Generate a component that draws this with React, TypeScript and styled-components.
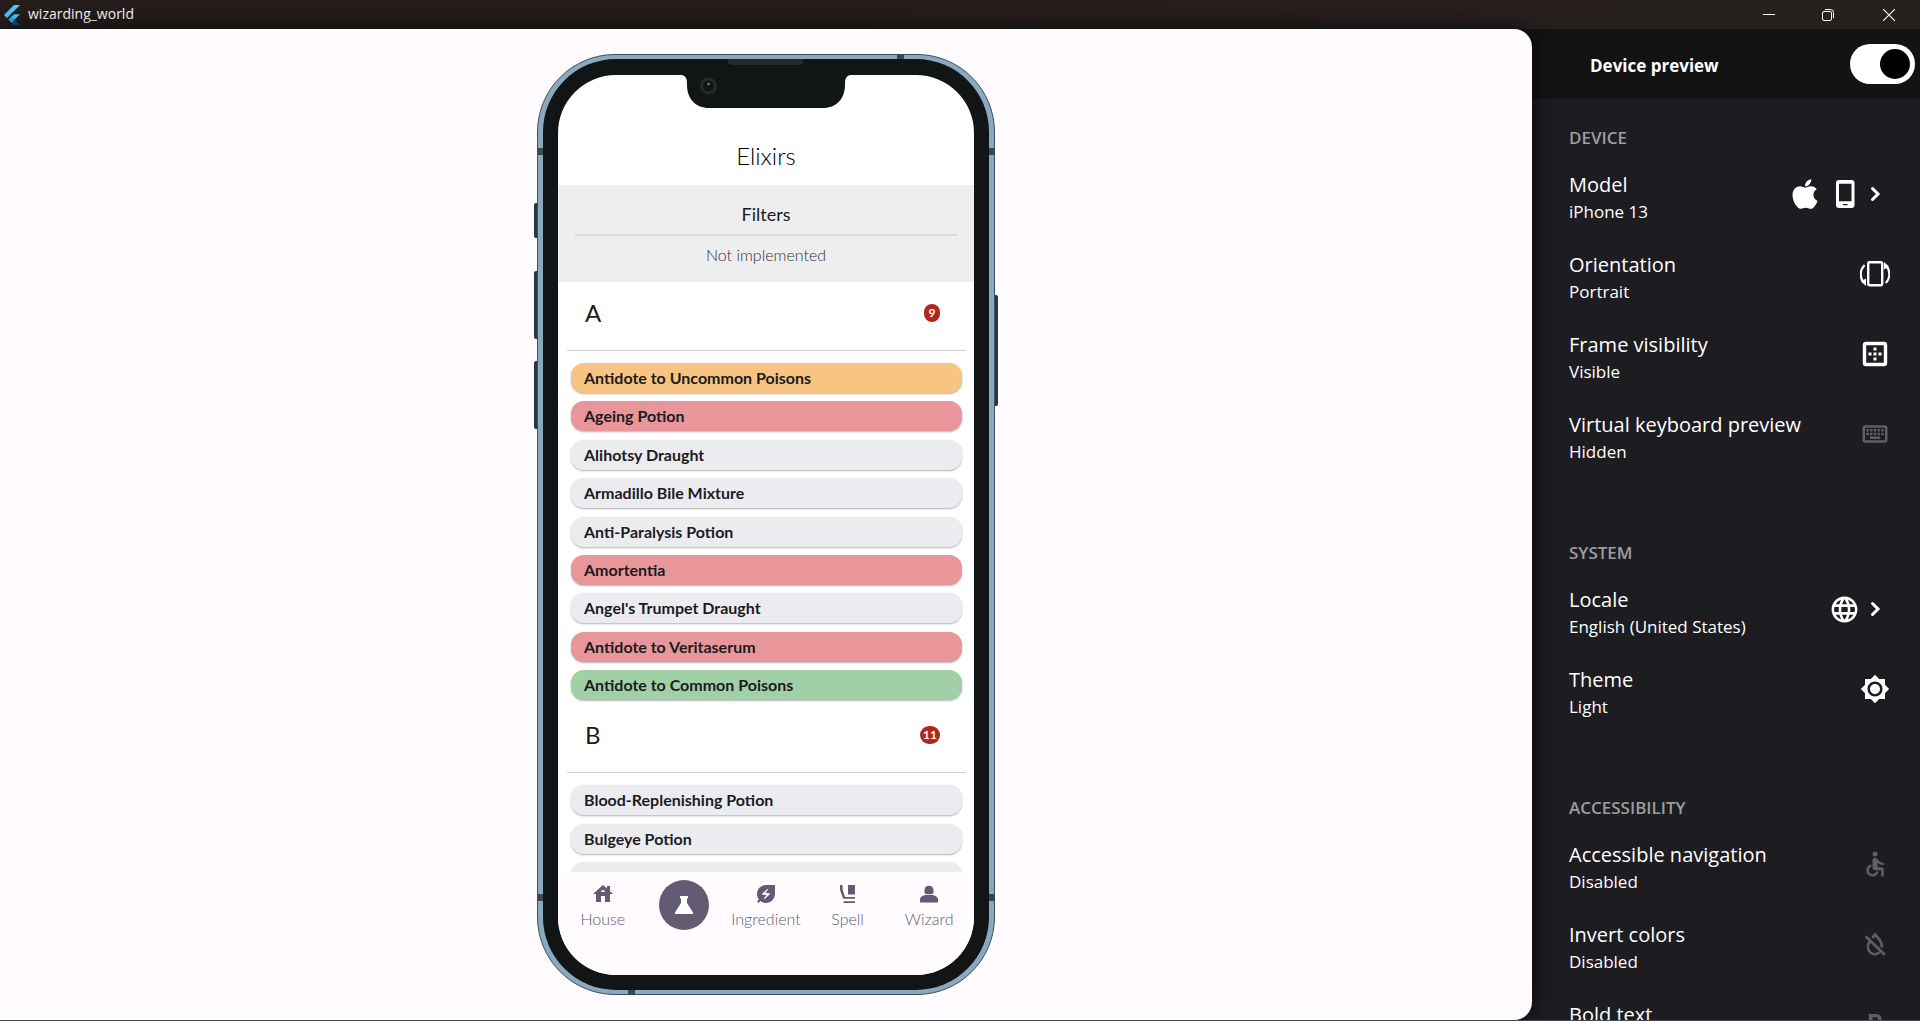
import React, { useState } from "react";
import styled, { createGlobalStyle } from "styled-components";
import {
  MdAccessible,
  MdBrightness7,
  MdEnergySavingsLeaf,
  MdFormatBold,
  MdHouse,
  MdLanguage,
  MdOutlineKeyboard,
} from "react-icons/md";
import { FaApple } from "react-icons/fa";

const systemFont = '"Open Sans", "Noto Sans", sans-serif';
const appFont = 'Lato, "Open Sans", sans-serif';

const GlobalStyle = createGlobalStyle`
  *, *::before, *::after { box-sizing: border-box; }
  body { margin: 0; background: #1d1c21; font-family: ${systemFont}; }
  button { font: inherit; color: inherit; background: none; border: 0; padding: 0; text-align: inherit; }
  h1, h2, h3, p, ul { margin: 0; padding: 0; font-weight: 400; }
  ul { list-style: none; }
  svg { display: block; flex: none; }
`;

/* ---------- window ---------- */

const Window = styled.div`
  display: flex;
  flex-direction: column;
  height: 100vh;
  overflow: hidden;
  border-bottom: 1px solid #434b57;
`;

const TitleBar = styled.header`
  display: flex;
  align-items: center;
  flex: 0 0 29px;
  padding-left: 2px;
  color: #fff;
  background: linear-gradient(90deg, #251d1b 0%, #251d1b 45%, #281f1f 78%, #25211e 90%);
`;

const WindowTitle = styled.h1`
  flex: 1;
  padding: 0 0 1px 6px;
  font-size: 14px;
  line-height: 20px;
`;

const WindowButton = styled.button`
  display: flex;
  align-items: center;
  justify-content: center;
  width: 59px;
  height: 28px;

  &:last-child {
    width: 63px;
  }
`;

const Workspace = styled.div`
  display: flex;
  flex: 1;
  min-height: 0;
`;

const Stage = styled.main`
  display: flex;
  justify-content: center;
  flex: 1;
  position: relative;
  z-index: 1;
  padding: 25px 0;
  background: #fffbff;
  border-radius: 0 18px 18px 0;
  box-shadow: 0 0 22px rgba(0, 0, 0, 0.75);
`;

/* ---------- phone ---------- */

const Phone = styled.div`
  position: relative;
  display: flex;
  width: 458px;
  max-height: 941px;
  padding: 4px 5px;
  border: 1px solid #3a505e;
  border-radius: 78px;
  background: #8aa9be;
`;

const SideKey = styled.span<{ $side: "left" | "right"; $top: number; $length: number }>`
  position: absolute;
  ${(p) => p.$side}: -4px;
  top: ${(p) => p.$top}px;
  width: 3px;
  height: ${(p) => p.$length}px;
  background: #1f3a48;
  border-radius: ${(p) => (p.$side === "left" ? "2px 0 0 2px" : "0 2px 2px 0")};
`;

const bandPlaces = {
  top: "top: -1px; right: 90px; width: 7px; height: 5px;",
  bottom: "bottom: -1px; left: 90px; width: 7px; height: 5px;",
  leftUpper: "left: -1px; top: 93px; width: 6px; height: 7px;",
  rightUpper: "right: -1px; top: 93px; width: 6px; height: 7px;",
  leftLower: "left: -1px; bottom: 93px; width: 6px; height: 7px;",
  rightLower: "right: -1px; bottom: 93px; width: 6px; height: 7px;",
};

const AntennaBand = styled.span<{ $place: keyof typeof bandPlaces }>`
  position: absolute;
  background: #39484f;
  ${(p) => bandPlaces[p.$place]}
`;

const Bezel = styled.div`
  position: relative;
  display: flex;
  flex: 1;
  min-width: 0;
  padding: 16px 15px 15px;
  border-radius: 73px;
  background: #111515;
`;

const Notch = styled.svg`
  position: absolute;
  top: 0;
  left: 50%;
  margin-left: -86px;
`;

const Screen = styled.section`
  display: flex;
  flex-direction: column;
  flex: 1;
  min-width: 0;
  overflow: hidden;
  border-radius: 58px;
  background: #fff;
  color: #1b1b1f;
  font-family: ${appFont};
`;

const AppBar = styled.header`
  display: flex;
  align-items: center;
  justify-content: center;
  flex: 0 0 110px;
  padding-top: 51px;
`;

const AppTitle = styled.h2`
  color: #000;
  font-size: 24px;
  line-height: 28px;
  font-weight: 300;
`;

const Filters = styled.section`
  padding: 16px 17px 15px;
  background: #eee;
  text-align: center;
`;

const FiltersTitle = styled.h3`
  padding-bottom: 7px;
  border-bottom: 2px solid #d9d9e0;
  font-size: 18px;
  line-height: 26px;
`;

const FiltersNote = styled.p`
  padding-top: 7px;
  color: #2e2e33;
  font-size: 16px;
  line-height: 24px;
  font-weight: 300;
`;

const Scroller = styled.div`
  flex: 1;
  min-height: 0;
  overflow: hidden;
`;

const GroupHeader = styled.header`
  display: flex;
  align-items: center;
  justify-content: space-between;
  height: 61px;
  padding: 0 34px 0 27px;
`;

const GroupLetter = styled.h3`
  font-size: 24px;
  line-height: 28px;
`;

const Badge = styled.span`
  min-width: 16px;
  padding: 0 3px;
  border-radius: 9px;
  background: #b3261e;
  color: #fff;
  font-size: 12px;
  line-height: 18px;
  font-weight: 700;
  text-align: center;
`;

const Divider = styled.hr`
  height: 1px;
  margin: 7px 8px 12px 9px;
  border: 0;
  background: #d2cfda;
`;

const PotionList = styled.ul<{ $minHeight: number }>`
  display: flex;
  flex-direction: column;
  justify-content: space-between;
  min-height: ${(p) => p.$minHeight}px;
  margin: 0 12px 4px 13px;
`;

const tones = {
  plain: "#ecebf0",
  orange: "#f8c482",
  red: "#e89699",
  green: "#a1d0a6",
};

const Potion = styled.button<{ $tone: keyof typeof tones }>`
  display: block;
  width: 100%;
  padding: 0 13px;
  border-radius: 13px;
  background: ${(p) => tones[p.$tone]};
  box-shadow: 0 1px 2px rgba(0, 0, 0, 0.3);
  font-size: 16px;
  line-height: 30px;
  font-weight: 700;
`;

const BottomNav = styled.nav`
  display: flex;
  flex: 0 0 103px;
  align-items: flex-start;
  padding: 4px 4px 0;
  border-top: 4px solid #fff;
  background: #fffbff;
  color: #625b71;
`;

const NavItem = styled.button`
  display: flex;
  flex: 1 1 0;
  flex-direction: column;
  align-items: center;
  gap: 3px;
  min-width: 0;
  padding-top: 2px;
  color: #625b71;
  font-size: 16px;
  line-height: 20px;
  font-weight: 300;
`;

const ActiveNavItem = styled(NavItem)`
  padding: 0;
`;

const ActiveDisc = styled.span`
  display: flex;
  align-items: center;
  justify-content: center;
  width: 50px;
  height: 50px;
  border-radius: 50%;
  background: #625b71;
  color: #fff;
`;

/* ---------- settings ---------- */

const Settings = styled.aside`
  display: flex;
  flex-direction: column;
  flex: 0 0 408px;
  margin-left: -20px;
  overflow: hidden;
  background: #1d1c21;
  color: #fff;
`;

const SettingsHeader = styled.label`
  display: flex;
  align-items: center;
  justify-content: space-between;
  flex: 0 0 70px;
  padding: 0 5px 0 78px;
  background: #131313;
  font-size: 17px;
  line-height: 24px;
  font-weight: 700;
`;

const HeaderText = styled.span`
  padding-top: 4px;
`;

const Switch = styled.input`
  appearance: none;
  display: flex;
  align-items: center;
  width: 65px;
  height: 40px;
  margin: 0;
  padding: 5px;
  border-radius: 20px;
  background: #fff;

  &::before {
    content: "";
    width: 30px;
    height: 30px;
    border-radius: 50%;
    background: #000;
  }

  &:checked {
    justify-content: flex-end;
  }
`;

const SettingsGroup = styled.section`
  flex: none;
  padding: 28px 30px 40px 57px;
`;

const GroupTitle = styled.h2`
  padding-bottom: 5px;
  color: #9d9d9f;
  font-size: 17px;
  line-height: 22px;
  font-weight: 600;
`;

const SettingRow = styled.button`
  display: flex;
  align-items: center;
  justify-content: space-between;
  width: 100%;
  height: 80px;
`;

const SettingText = styled.span`
  display: grid;
  padding-top: 7px;
  line-height: 27px;
`;

const SettingName = styled.span`
  font-size: 20px;
`;

const SettingValue = styled.span`
  font-size: 17px;
`;

const SettingIcons = styled.span<{ $muted?: boolean }>`
  display: flex;
  align-items: center;
  color: ${(p) => (p.$muted ? "#606063" : "#fff")};
`;

const AppleSlot = styled.span`
  padding-right: 8px;
`;

/* ---------- drawings ---------- */

const FlutterLogo = () => (
  <svg width="20" height="20" viewBox="0 0 24 24" aria-hidden="true">
    <path d="M14.3 0 2.3 12 6 15.7 21.7 0z" fill="#54c5f8" />
    <path d="M14.3 11.1h7.4l-6.5 6.4-3.6 3.7-3.7-3.7z" fill="#54c5f8" />
    <path d="m11.6 21.2 2.7 2.8h7.4l-6.5-6.5z" fill="#01579b" />
    <path d="m7.9 17.5 3.7-3.6 3.6 3.6-3.6 3.7z" fill="#29b6f6" />
  </svg>
);

const MinimizeIcon = () => (
  <svg width="12" height="12" viewBox="0 0 12 12" stroke="#fff">
    <path d="M0 5.5h12" />
  </svg>
);

const RestoreIcon = () => (
  <svg width="12" height="12" viewBox="0 0 12 12" fill="none" stroke="#fff">
    <rect x="0.5" y="2.5" width="9" height="9" rx="1.5" />
    <path d="M3 0.5h5.5a3 3 0 0 1 3 3V9" />
  </svg>
);

const CloseIcon = () => (
  <svg width="12" height="12" viewBox="0 0 12 12" stroke="#fff" strokeWidth="1.1">
    <path d="M0 0l12 12M12 0 0 12" />
  </svg>
);

const PhoneIcon = () => (
  <svg width="30" height="30" viewBox="0 0 30 30" fill="currentColor">
    <path
      fillRule="evenodd"
      d="M9 1h12.500a3 3 0 0 1 3 3v22a3 3 0 0 1-3 3H9a3 3 0 0 1-3-3V4a3 3 0 0 1 3-3zm0 3.800v17.400h12.500V4.800zM13 25v1.200h4.500V25z"
    />
  </svg>
);

const ChevronIcon = () => (
  <svg width="30" height="30" viewBox="0 0 30 30" fill="none" stroke="currentColor" strokeWidth="3" strokeLinecap="round">
    <path d="m12.500 9.500 5.500 5.500-5.500 5.500" />
  </svg>
);

const RotateIcon = () => (
  <svg width="30" height="30" viewBox="0 0 30 30" fill="none" stroke="currentColor">
    <rect x="8.2" y="3.2" width="14" height="23" rx="1.2" strokeWidth="2.4" />
    <path d="M4.6 6C-.6 11.500-.2 19 3.6 23.500M25.700 24c5-5 4.600-12.500.700-17" strokeWidth="2.200" />
    <path d="M6 19.500V27l-5-4.500zM24 10.500V3l5 4.500z" fill="currentColor" stroke="none" />
  </svg>
);

const FrameIcon = () => (
  <svg width="30" height="30" viewBox="0 0 30 30" fill="currentColor">
    <rect x="4.500" y="4.500" width="21" height="21" rx="1.500" fill="none" stroke="currentColor" strokeWidth="3.400" />
    <path d="M13.500 8.500h3v3h-3zM13.500 13.500h3v3h-3zM13.500 18.500h3v3h-3zM8.500 13.500h3v3h-3zM18.500 13.500h3v3h-3z" />
  </svg>
);

const InvertOffIcon = () => (
  <svg width="30" height="30" viewBox="0 0 30 30" fill="none" stroke="currentColor" strokeWidth="2.600">
    <path d="M9.800 12.600c-2.800 4-2.300 8.400.600 10.900 2.700 2.200 6.700 2.200 9.300-.200" />
    <path d="m12.300 8.800 2.800-3.200 5.200 6.300c1.300 1.900 1.900 4.200 1.500 6.600" />
    <path d="m5.700 7.300 19 18.400" />
  </svg>
);

const FlaskIcon = () => (
  <svg width="18" height="18" viewBox="0 0 18 18" fill="currentColor">
    <path d="M5 0h8v2.500h-1V7l6 9.500V18H0v-1.500L6 7V2.500H5z" />
  </svg>
);

const SpellIcon = () => (
  <svg width="24" height="24" viewBox="0 0 24 24" fill="currentColor">
    <path d="M4 3h2.600v4.500L9 15h10v1.700H7.200L4 8zM12 3h7v9.500h-7zM7.500 19.200H19V21H7.500z" />
  </svg>
);

const WizardIcon = () => (
  <svg width="24" height="24" viewBox="0 0 24 24" fill="currentColor">
    <path d="M7.500 8c0-2.800 2-4.300 4.500-4.300S16.500 5.200 16.500 8v3.200c-2 1.200-7 1.200-9 0zM3 20.500v-3c0-3 3.500-4.700 9-4.700s9 1.700 9 4.700v3z" />
  </svg>
);

/* ---------- data ---------- */

type Tone = keyof typeof tones;
type Group = { letter: string; count: number; minHeight: number; potions: [string, Tone][] };

const groups: Group[] = [
  {
    letter: "A",
    count: 9,
    minHeight: 337,
    potions: [
      ["Antidote to Uncommon Poisons", "orange"],
      ["Ageing Potion", "red"],
      ["Alihotsy Draught", "plain"],
      ["Armadillo Bile Mixture", "plain"],
      ["Anti-Paralysis Potion", "plain"],
      ["Amortentia", "red"],
      ["Angel's Trumpet Draught", "plain"],
      ["Antidote to Veritaserum", "red"],
      ["Antidote to Common Poisons", "green"],
    ],
  },
  {
    letter: "B",
    count: 11,
    minHeight: 107,
    potions: [
      ["Blood-Replenishing Potion", "plain"],
      ["Bulgeye Potion", "plain"],
      ["Baneberry Potion", "plain"],
    ],
  },
];

type Setting = { name: string; value: string; icons: React.ReactNode; muted?: boolean };

const settings: { title: string; rows: Setting[] }[] = [
  {
    title: "DEVICE",
    rows: [
      {
        name: "Model",
        value: "iPhone 13",
        icons: (
          <>
            <AppleSlot>
              <FaApple size={34} />
            </AppleSlot>
            <PhoneIcon />
            <ChevronIcon />
          </>
        ),
      },
      { name: "Orientation", value: "Portrait", icons: <RotateIcon /> },
      { name: "Frame visibility", value: "Visible", icons: <FrameIcon /> },
      { name: "Virtual keyboard preview", value: "Hidden", icons: <MdOutlineKeyboard size={30} />, muted: true },
    ],
  },
  {
    title: "SYSTEM",
    rows: [
      {
        name: "Locale",
        value: "English (United States)",
        icons: (
          <>
            <MdLanguage size={31} />
            <ChevronIcon />
          </>
        ),
      },
      { name: "Theme", value: "Light", icons: <MdBrightness7 size={30} /> },
    ],
  },
  {
    title: "ACCESSIBILITY",
    rows: [
      { name: "Accessible navigation", value: "Disabled", icons: <MdAccessible size={30} />, muted: true },
      { name: "Invert colors", value: "Disabled", icons: <InvertOffIcon />, muted: true },
      { name: "Bold text", value: "Disabled", icons: <MdFormatBold size={30} />, muted: true },
    ],
  },
];

export default function App() {
  const [preview, setPreview] = useState(true);

  return (
    <Window>
      <GlobalStyle />
      <TitleBar>
        <FlutterLogo />
        <WindowTitle>wizarding_world</WindowTitle>
        <WindowButton aria-label="Minimize"><MinimizeIcon /></WindowButton>
        <WindowButton aria-label="Restore"><RestoreIcon /></WindowButton>
        <WindowButton aria-label="Close"><CloseIcon /></WindowButton>
      </TitleBar>

      <Workspace>
        <Stage>
          <Phone>
            <SideKey $side="left" $top={148} $length={35} />
            <SideKey $side="left" $top={216} $length={68} />
            <SideKey $side="left" $top={306} $length={68} />
            <SideKey $side="right" $top={240} $length={111} />
            <AntennaBand $place="top" />
            <AntennaBand $place="bottom" />
            <AntennaBand $place="leftUpper" />
            <AntennaBand $place="rightUpper" />
            <AntennaBand $place="leftLower" />
            <AntennaBand $place="rightLower" />
            <Bezel>
              <Screen>
                <AppBar>
                  <AppTitle>Elixirs</AppTitle>
                </AppBar>
                <Filters>
                  <FiltersTitle>Filters</FiltersTitle>
                  <FiltersNote>Not implemented</FiltersNote>
                </Filters>
                <Scroller>
                  {groups.map((group) => (
                    <section key={group.letter}>
                      <GroupHeader>
                        <GroupLetter>{group.letter}</GroupLetter>
                        <Badge>{group.count}</Badge>
                      </GroupHeader>
                      <Divider />
                      <PotionList $minHeight={group.minHeight}>
                        {group.potions.map(([name, tone]) => (
                          <li key={name}>
                            <Potion $tone={tone}>{name}</Potion>
                          </li>
                        ))}
                      </PotionList>
                    </section>
                  ))}
                </Scroller>
                <BottomNav>
                  <NavItem><MdHouse size={24} />House</NavItem>
                  <ActiveNavItem aria-label="Elixir" aria-current="page">
                    <ActiveDisc><FlaskIcon /></ActiveDisc>
                  </ActiveNavItem>
                  <NavItem><MdEnergySavingsLeaf size={24} />Ingredient</NavItem>
                  <NavItem><SpellIcon />Spell</NavItem>
                  <NavItem><WizardIcon />Wizard</NavItem>
                </BottomNav>
              </Screen>
              <Notch width="172" height="49" viewBox="0 0 172 49" aria-hidden="true">
                <path d="M0 14v2h2q5 1 5 8v2c0 14 9 23 22 23h114c13 0 22-9 22-23v-2q0-7 5-8h2v-2z" fill="#111515" />
                <path d="M48 0h75v2q0 4-4 4H52q-4 0-4-4z" fill="#25292b" />
                <circle cx="28.500" cy="27" r="7" fill="#111515" stroke="#262a2b" strokeWidth="3" />
                <circle cx="28.500" cy="25" r="1.300" fill="#7d8284" />
              </Notch>
            </Bezel>
          </Phone>
        </Stage>

        <Settings>
          <SettingsHeader>
            <HeaderText>Device preview</HeaderText>
            <Switch
              type="checkbox"
              role="switch"
              checked={preview}
              onChange={(e) => setPreview(e.target.checked)}
            />
          </SettingsHeader>
          {settings.map((group) => (
            <SettingsGroup key={group.title}>
              <GroupTitle>{group.title}</GroupTitle>
              {group.rows.map((row) => (
                <SettingRow key={row.name}>
                  <SettingText>
                    <SettingName>{row.name}</SettingName>
                    <SettingValue>{row.value}</SettingValue>
                  </SettingText>
                  <SettingIcons $muted={row.muted}>{row.icons}</SettingIcons>
                </SettingRow>
              ))}
            </SettingsGroup>
          ))}
        </Settings>
      </Workspace>
    </Window>
  );
}
